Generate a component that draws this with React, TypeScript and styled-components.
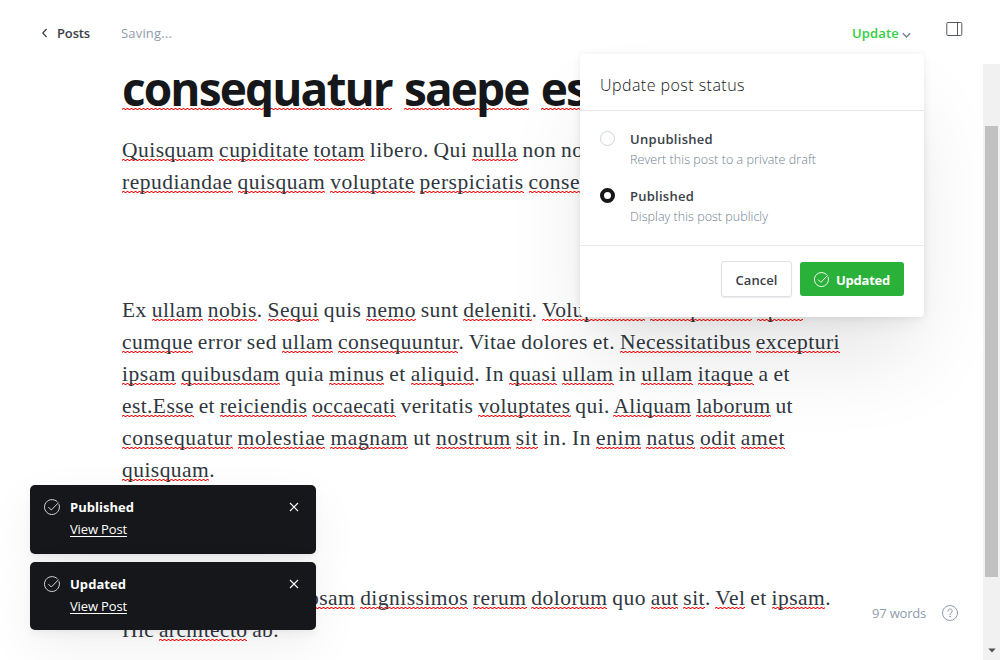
import React, { useLayoutEffect, useRef, useState } from "react";
import styled, { createGlobalStyle } from "styled-components";

const Global = createGlobalStyle`
  * { box-sizing: border-box; }
  body { margin: 0; background: #fff; overflow: hidden; font-family: "Open Sans", "Noto Sans", sans-serif; font-size: 13px; }
  button, a { font: inherit; color: inherit; }
  button { border: 0; background: none; padding: 0; cursor: pointer; }
`;

const Page = styled.div`
  position: relative;
  width: 1000px;
  height: 660px;
  overflow: hidden;
  display: flex;
  flex-direction: column;
`;

const Header = styled.header`
  flex: none;
  height: 64px;
  display: flex;
  align-items: flex-start;
  padding: 22px 37px 0 41px;
  line-height: 22px;
`;
const Back = styled.a`
  display: flex;
  gap: 8px;
  width: 80px;
  color: #394047;
  font-weight: 600;
  text-decoration: none;
  svg { margin-top: 6px; }
`;
const Status = styled.span`
  flex: 1;
  color: #8e9cac;
`;
const UpdateTrigger = styled.button`
  display: flex;
  gap: 3px;
  line-height: 22px;
  color: #30cf43;
  font-weight: 600;
  svg { margin-top: 10px; color: #738393; }
`;
const SidebarToggle = styled.button`
  margin: -2px 0 0 35px;
  height: 16px;
  color: #54595f;
  svg { display: block; }
`;

const Body = styled.div`
  flex: 1;
  min-height: 0;
  display: flex;
  justify-content: space-between;
`;
const Editor = styled.main`
  width: 860px;
  padding-left: 122px;
`;
const Title = styled.h1`
  margin: 0 0 21px;
  font-size: 46px;
  line-height: 49px;
  font-weight: 700;
  word-spacing: 2px;
  color: #15171a;
`;
const Paragraph = styled.p<{ $gap?: number }>`
  margin: 0 0 ${(p) => p.$gap ?? 0}px;
  font-family: "Liberation Serif", serif;
  font-size: 21.5px;
  line-height: 32px;
  word-spacing: -1px;
  color: #30373e;
`;
const LineBox = styled.span`
  display: block;
  height: 1lh;
  white-space: nowrap;
`;
const Misspelled = styled.span<{ $large?: boolean }>`
  background:
    repeating-linear-gradient(90deg, #f66 0 1px, #f00 1px 2px, #f66 2px 3px, transparent 3px 4px) 0 calc(100% - ${(p) => (p.$large ? 10 : 2)}px) / 100% 1px no-repeat,
    repeating-linear-gradient(90deg, #f66 0 1px, transparent 1px 2px, #f66 2px 3px, #f00 3px 4px) 0 calc(100% - ${(p) => (p.$large ? 9 : 1)}px) / 100% 1px no-repeat;
`;

const Fitted = styled.span`
  display: inline-block;
  white-space: nowrap;
`;

/* Spreads its text over a given measure by adjusting the letter spacing. */
function Fit({ width, children }: { width: number; children: React.ReactNode }) {
  const ref = useRef<HTMLSpanElement>(null);
  const [spacing, setSpacing] = useState(0);
  useLayoutEffect(() => {
    const el = ref.current;
    if (!el || !el.textContent) return;
    setSpacing((width - el.getBoundingClientRect().width) / el.textContent.length);
  }, [width]);
  return (
    <Fitted ref={ref} style={{ letterSpacing: spacing }}>
      {children}
    </Fitted>
  );
}

/* Words wrapped in underscores are marked by the spell checker. */
function Line({ text, width, large }: { text: string; width: number; large?: boolean }) {
  return (
    <LineBox>
      <Fit width={width}>
        {text.split("_").map((part, i) =>
          i % 2 ? <Misspelled key={i} $large={large}>{part}</Misspelled> : part
        )}
      </Fit>
    </LineBox>
  );
}

const Scrollbar = styled.div`
  width: 17px;
  background: #f1f1f1;
  display: flex;
  flex-direction: column;
  align-items: center;
  justify-content: space-between;
  padding: 62px 0 7px;
`;
const Thumb = styled.div`
  width: 13px;
  height: 451px;
  background: #c1c1c1;
`;

const Popover = styled.section`
  position: absolute;
  left: 580px;
  top: 54px;
  width: 344px;
  height: 263px;
  background: #fff;
  border-radius: 4px;
  box-shadow: 0 0 7px rgba(0, 0, 0, 0.08), 0 2.1px 2.2px -5px rgba(0, 0, 0, 0.06), 0 10px 18px -5px rgba(0, 0, 0, 0.06), 0 50px 80px -10px rgba(0, 0, 0, 0.1);
  display: flex;
  flex-direction: column;
`;
const PopoverTitle = styled.h2`
  margin: 0;
  height: 57px;
  padding: 20px 20px 0;
  border-bottom: 1px solid #e5e8eb;
  font-size: 16px;
  line-height: 22px;
  font-weight: 300;
  color: #15171a;
`;
const Options = styled.div`
  height: 135px;
  padding: 18px 20px 0;
  border-bottom: 1px solid #e5e8eb;
  display: flex;
  flex-direction: column;
  gap: 15px;
`;
const Option = styled.label`
  display: flex;
  gap: 15px;
  height: 42px;
`;
const Radio = styled.span<{ $on?: boolean }>`
  width: 15px;
  height: 15px;
  margin-top: 2px;
  border-radius: 50%;
  border: ${(p) => (p.$on ? "4px solid #15171a" : "1px solid #ced4d9")};
  background: #fff;
`;
const OptionText = styled.span`
  display: flex;
  flex-direction: column;
  line-height: 21px;
`;
const OptionName = styled.strong`
  font-weight: 600;
  color: #394047;
`;
const OptionHint = styled.span`
  font-size: 12.5px;
  font-weight: 300;
  line-height: 20px;
  color: #6f7f8f;
`;
const Actions = styled.footer`
  display: flex;
  justify-content: flex-end;
  gap: 8px;
  padding: 15px 20px 0;
`;
const CancelButton = styled.button`
  width: 71px;
  height: 36px;
  padding-top: 2px;
  border: 1px solid #dde1e5;
  border-radius: 3px;
  box-shadow: 0 1px 1px rgba(0, 0, 0, 0.08);
  font-weight: 600;
  color: #394047;
`;
const UpdatedButton = styled.button`
  width: 104px;
  height: 34px;
  margin-top: 1px;
  border-radius: 3px;
  background: #2ab13a;
  color: #fff;
  font-weight: 700;
  line-height: 20px;
  display: flex;
  align-items: flex-start;
  justify-content: center;
  padding-top: 8px;
  gap: 7px;
  svg { margin-top: 2px; }
`;

const Toasts = styled.aside`
  position: absolute;
  left: 30px;
  top: 485px;
  display: flex;
  flex-direction: column;
  gap: 8px;
`;
const ToastBox = styled.div<{ $height: number }>`
  width: 286px;
  height: ${(p) => p.$height}px;
  border-radius: 5px;
  background: #15171a;
  color: #fff;
  padding: 11px 17px 0 14px;
  display: flex;
  gap: 10px;
  box-shadow: 0 2px 3px rgba(0, 0, 0, 0.02), 0 5px 10px rgba(0, 0, 0, 0.04), 0 18px 50px rgba(0, 0, 0, 0.06);
  > svg { flex: none; margin-top: 3px; color: #d5d6d8; }
`;
const ToastText = styled.div`
  flex: 1;
  display: flex;
  flex-direction: column;
  align-items: flex-start;
  line-height: 22px;
`;
const ToastTitle = styled.strong`
  font-weight: 700;
  font-size: 13px;
`;
const ToastLink = styled.a`
  line-height: 23px;
  ${Fitted} {
    text-decoration: underline;
    text-underline-offset: 2px;
  }
`;
const CloseButton = styled.button`
  align-self: flex-start;
  margin-top: 6px;
  height: 10px;
  svg { display: block; }
`;

const Footer = styled.div`
  position: absolute;
  right: 42px;
  top: 602px;
  display: flex;
  gap: 16px;
  line-height: 22px;
  color: #8e9cac;
  svg { margin-top: 3px; }
`;

function CheckCircle({ size }: { size: number }) {
  return (
    <svg width={size} height={size} viewBox="0 0 16 16" fill="none" stroke="currentColor" strokeWidth="1" strokeLinecap="round" strokeLinejoin="round">
      <path d="M15.1 5.6A7.5 7.5 0 1 1 13.2 2.6" />
      <path d="M4.6 8.3 7.3 11 14.4 3.8" />
    </svg>
  );
}

function Toast({ title, titleWidth, height }: { title: string; titleWidth: number; height: number }) {
  return (
    <ToastBox $height={height}>
      <CheckCircle size={16} />
      <ToastText>
        <ToastTitle><Fit width={titleWidth}>{title}</Fit></ToastTitle>
        <ToastLink href="#"><Fit width={57}>View Post</Fit></ToastLink>
      </ToastText>
      <CloseButton aria-label="Close">
        <svg width="10" height="10" viewBox="0 0 10 10" stroke="#fff" strokeWidth="1.1">
          <path d="M1 1l8 8M9 1l-8 8" />
        </svg>
      </CloseButton>
    </ToastBox>
  );
}

export default function App() {
  return (
    <Page>
      <Global />
      <Header>
        <Back href="#">
          <svg width="8" height="10" viewBox="0 0 8 10" fill="none" stroke="#394047" strokeWidth="1.2">
            <path d="M5.6 1 1.8 5l3.8 4" />
          </svg>
          <Fit width={33}>Posts</Fit>
        </Back>
        <Status><Fit width={51}>Saving...</Fit></Status>
        <UpdateTrigger>
          <Fit width={47}>Update</Fit>
          <svg width="9" height="7" viewBox="0 0 9 7" fill="none" stroke="currentColor" strokeWidth="1.5">
            <path d="M.8 1.3 4.5 5l3.7-3.7" />
          </svg>
        </UpdateTrigger>
        <SidebarToggle aria-label="Settings">
          <svg width="17" height="15" viewBox="0 0 17 15" fill="none" stroke="currentColor">
            <rect x=".8" y="1.5" width="15" height="13" rx="1" />
            <path d="M11.5 1.5v13" />
          </svg>
        </SidebarToggle>
      </Header>
      <Body>
        <Editor>
          <Title>
            <Line large width={483} text="_consequatur_ _saepe_ _est_" />
          </Title>
          <Paragraph $gap={96}>
            <Line width={488} text="_Quisquam_ _cupiditate_ _totam_ libero. Qui _nulla_ non nobis" />
            <Line width={516} text="_repudiandae_ _quisquam_ _voluptate_ _perspiciatis_ _consequatur_" />
          </Paragraph>
          <Paragraph $gap={96}>
            <Line width={681} text="Ex _ullam_ _nobis_. _Sequi_ quis _nemo_ sunt _deleniti_. _Voluptatem_ _voluptatem_ _optio_" />
            <Line width={718} text="_cumque_ error sed _ullam_ _consequuntur_. Vitae dolores et. _Necessitatibus_ _excepturi_" />
            <Line width={668} text="_ipsam_ _quibusdam_ quia _minus_ et _aliquid_. In _quasi_ _ullam_ in _ullam_ _itaque_ a et" />
            <Line width={671} text="_est.Esse_ et _reiciendis_ _occaecati_ veritatis _voluptates_ qui. _Aliquam_ _laborum_ ut" />
            <Line width={663} text="_consequatur_ _molestiae_ _magnam_ ut _nostrum_ _sit_ in. In _enim_ _natus_ _odit_ _amet_" />
            <Line width={93} text="_quisquam_." />
          </Paragraph>
          <Paragraph>
            <Line width={709} text="Voluptatem dolores _ipsam_ _dignissimos_ _rerum_ _dolorum_ quo _aut_ _sit_. _Vel_ et _ipsam_." />
            <Line width={157} text="Hic _architecto_ ab." />
          </Paragraph>
        </Editor>
        <Scrollbar>
          <Thumb />
          <svg width="8" height="5" viewBox="0 0 8 5"><path d="M.3.5h7.4L4 4.4z" fill="#505050" /></svg>
        </Scrollbar>
      </Body>
      <Footer>
        <Fit width={54}>97 words</Fit>
        <svg width="16" height="16" viewBox="0 0 16 16" fill="none" stroke="#8e9cac" strokeWidth="1">
          <circle cx="8" cy="8" r="7.5" />
          <path d="M5.8 6.2a2.2 2.2 0 1 1 3.2 1.9c-.7.4-1 .8-1 1.6" strokeLinecap="round" />
          <circle cx="8" cy="11.6" r=".4" fill="#8e9cac" />
        </svg>
      </Footer>
      <Toasts>
        <Toast title="Published" titleWidth={64} height={69} />
        <Toast title="Updated" titleWidth={56} height={68} />
      </Toasts>
      <Popover>
        <PopoverTitle><Fit width={145}>Update post status</Fit></PopoverTitle>
        <Options>
          <Option>
            <Radio />
            <OptionText>
              <OptionName><Fit width={83}>Unpublished</Fit></OptionName>
              <OptionHint><Fit width={186}>Revert this post to a private draft</Fit></OptionHint>
            </OptionText>
          </Option>
          <Option>
            <Radio $on />
            <OptionText>
              <OptionName><Fit width={64}>Published</Fit></OptionName>
              <OptionHint><Fit width={138}>Display this post publicly</Fit></OptionHint>
            </OptionText>
          </Option>
        </Options>
        <Actions>
          <CancelButton><Fit width={42}>Cancel</Fit></CancelButton>
          <UpdatedButton>
            <CheckCircle size={15} />
            <Fit width={54}>Updated</Fit>
          </UpdatedButton>
        </Actions>
      </Popover>
    </Page>
  );
}
